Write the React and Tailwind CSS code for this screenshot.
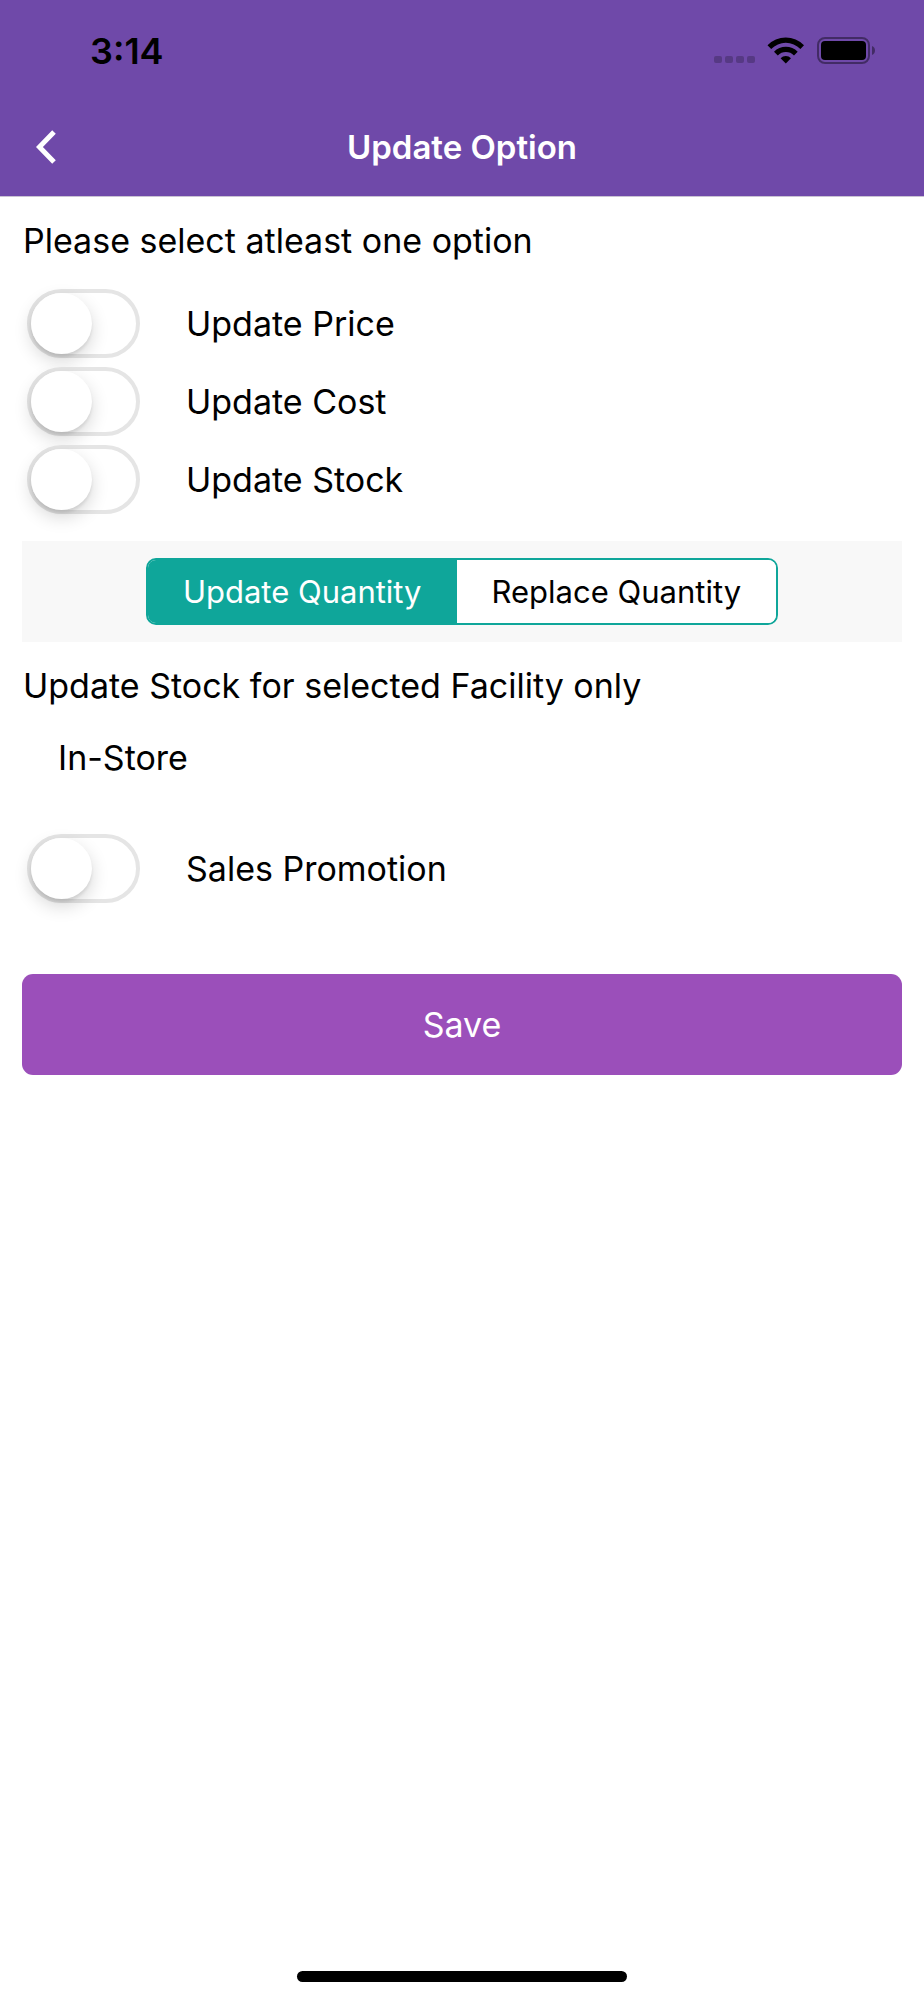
import { useState } from "react";

const UPDATE_OPTIONS = [
  { key: "price", label: "Update Price" },
  { key: "cost", label: "Update Cost" },
  { key: "stock", label: "Update Stock" },
];

const QUANTITY_MODES = [
  { key: "update", label: "Update Quantity" },
  { key: "replace", label: "Replace Quantity" },
];

const StatusBar = () => (
  <div className="flex items-center justify-between h-[101px] pl-[90px] pr-12 text-black">
    <span className="text-[36px] leading-10 font-semibold">3:14</span>
    <svg width="162" height="28" viewBox="0 0 162 28" aria-hidden="true">
      <g fillOpacity="0.22">
        <rect x="0" y="19" width="8" height="7" rx="2" />
        <rect x="11" y="19" width="8" height="7" rx="2" />
        <rect x="22" y="19" width="8" height="7" rx="2" />
        <rect x="33" y="19" width="8" height="7" rx="2" />
      </g>
      {/* Wifi */}
      <path d="M53.5 8.2 A25.5 25.5 0 0 1 90 8.2 L86.4 12 A20.4 20.4 0 0 0 57.2 12 Z" />
      <path d="M60 14.8 A16.6 16.6 0 0 1 83.7 14.8 L80 18.5 A11.4 11.4 0 0 0 63.8 18.5 Z" />
      <path d="M66.6 21.2 A7.4 7.4 0 0 1 77 21.2 L71.8 26.5 Z" />
      {/* Battery */}
      <rect x="104" y="1" width="51" height="25" rx="7" fill="none" stroke="#000" strokeOpacity="0.4" strokeWidth="2" />
      <rect x="107" y="4" width="45" height="19" rx="4" />
      <path d="M158 9 C162 10.5 162 16.5 158 18 Z" fillOpacity="0.4" />
    </svg>
  </div>
);

const Toggle = ({ label, checked, onChange }) => (
  <label className="flex items-center gap-[46px] pl-[5px]">
    <input
      type="checkbox"
      role="switch"
      checked={checked}
      onChange={onChange}
      className="appearance-none shrink-0 w-[113px] h-[69px] rounded-full border-4 border-[#e5e5e5] bg-white checked:border-[#0fa69a] checked:bg-[#0fa69a] before:block before:size-[61px] before:rounded-full before:bg-white before:shadow-[0_7px_18px_rgba(0,0,0,0.16),0_3px_3px_rgba(0,0,0,0.08)] checked:before:ml-11"
    />
    <span>{label}</span>
  </label>
);

const App = () => {
  const [selected, setSelected] = useState({});
  const [mode, setMode] = useState("update");

  const toggle = (key) => setSelected((prev) => ({ ...prev, [key]: !prev[key] }));

  return (
    <div className="min-h-screen flex flex-col bg-white text-black font-['Inter',sans-serif] text-[34px] leading-10">
      <header className="bg-[#6f49a9] border-b border-[#c9c2d3]">
        <StatusBar />
        <div className="grid grid-cols-[1fr_auto_1fr] items-center h-[95px] px-9 pb-1">
          <button type="button" aria-label="Back" className="justify-self-start">
            <svg width="20" height="34" viewBox="0 0 20 34" fill="none" stroke="#fff" strokeWidth="5">
              <path d="M18 2 L3.4 17 L18 32" />
            </svg>
          </button>
          <h1 className="text-[33px] font-semibold text-white">Update Option</h1>
        </div>
      </header>

      <main className="flex-1 px-[22px] pt-6">
        <h2 className="pl-px">Please select atleast one option</h2>

        <div className="flex flex-col gap-[9px] mt-7">
          {UPDATE_OPTIONS.map((o) => (
            <Toggle key={o.key} label={o.label} checked={!!selected[o.key]} onChange={() => toggle(o.key)} />
          ))}
        </div>

        <div className="flex justify-center mt-[27px] py-[17px] bg-[#f8f8f8]">
          <div className="flex border-2 border-[#0fa69a] rounded-[10px] overflow-hidden bg-white text-[31px]">
            {QUANTITY_MODES.map((m) => (
              <button
                key={m.key}
                type="button"
                aria-pressed={mode === m.key}
                onClick={() => setMode(m.key)}
                className={`h-[63px] px-[35px] ${mode === m.key ? "bg-[#0fa69a] text-white" : "bg-white text-black"}`}
              >
                {m.label}
              </button>
            ))}
          </div>
        </div>

        <h2 className="mt-6 pl-px">Update Stock for selected Facility only</h2>
        <p className="mt-8 mb-14 pl-9">In-Store</p>

        <Toggle label="Sales Promotion" checked={!!selected.promo} onChange={() => toggle("promo")} />

        <button type="button" className="block w-full h-[101px] mt-[71px] rounded-[11px] bg-[#9b4fba] text-white">
          Save
        </button>
      </main>

      {/* Home indicator */}
      <div className="w-[330px] h-[11px] mx-auto mb-[18px] rounded-full bg-black" />
    </div>
  );
};

export default App;
